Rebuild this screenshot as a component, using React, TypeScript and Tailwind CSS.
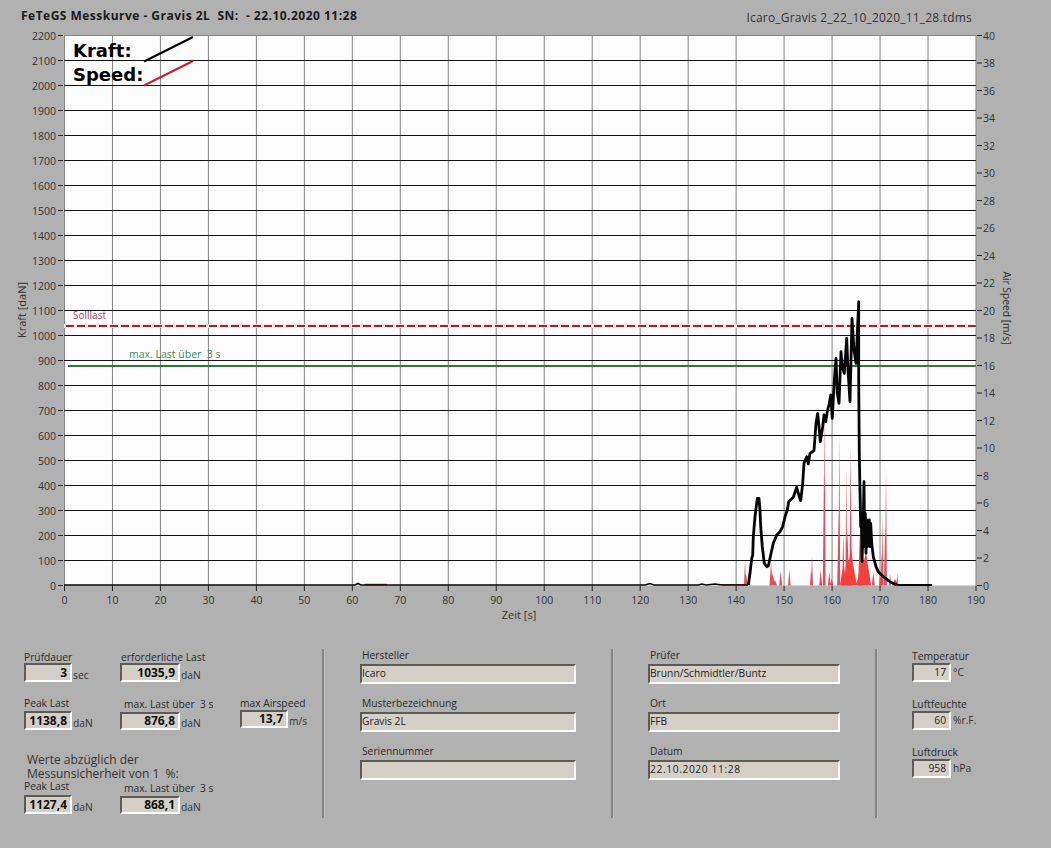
import React from "react";

const X0 = 64.5;
const XS = 911.5 / 190;
const Y0 = 585.5;
const hLines = Array.from({ length: 23 }, (_, i) => i);
const vLines = Array.from({ length: 20 }, (_, i) => i);
const rLabels = Array.from({ length: 21 }, (_, i) => i);

const z: [number, number][] = [
  [55,915],[60,880],[65,835],[68,825],[70,770],[75,710],[82,655],[87,655],[90,690],[92,740],[97,800],[103,850],[110,860],[115,858],[122,825],[130,790],[140,765],[150,755],[158,740],[165,710],[172,690],[176,665],[190,652],[200,622],[205,640],[212,662],[218,610],[222,550],[230,530],[235,552],[240,520],[252,512],[258,430],[263,400],[267,440],[271,485],[278,440],[282,405],[287,425],[292,395],[298,370],[302,345],[307,415],[313,300],[318,235],[322,340],[327,370],[333,215],[337,260],[343,280],[350,175],[354,270],[360,365],[366,115],[372,210],[378,250],[386,65],[386,300],[388,520],[390,640],[392,740],[394,700],[396,845],[399,760],[402,605],[404,800],[406,700],[408,820],[410,720],[412,800],[414,730],[416,790],[418,720],[420,800],[422,730],[425,790],[430,830],[438,860],[445,875],[460,890],[480,905],[500,915],
];
const toPage = ([a, b]: [number, number]) => `${(730 + a / 3).toFixed(1)},${(280 + b / 3).toFixed(1)}`;
const flatPts = "64,585 355,585 358,583.5 361,585 645,585 650,583.5 654,585 698,585 702,584 706,585 715,584 722,585 748,585";
const curvePts = z.map(toPage).join(" ");
const tailPts = "896.7,585 932,585";

const spikes: [number, number, number][] = [
  [45,840,2],[48,880,3],[123,845,3],[128,880,5],[135,900,4],[152,872,3],[178,868,2.5],[246,825,2],[243,870,2],[272,870,3],
  [282,570,2.5],[284,370,1.8],[298,875,3],[305,895,3],[326,690,3],[328,455,1.8],[340,760,2.5],[349,565,1.8],[352,750,4],[362,500,2.5],
  [395,595,2.5],[390,750,4],[430,875,3],[455,810,2],[458,705,1.8],[468,560,1.8],[466,740,3],[480,880,2],[502,880,2],
];
const spikePath = spikes
  .map(([a, b, w]) => {
    const x = 730 + a / 3;
    const y = 280 + b / 3;
    return `M${(x - w / 2).toFixed(1)} 585.5L${x.toFixed(1)} ${y.toFixed(1)}L${(x + w / 2).toFixed(1)} 585.5Z`;
  })
  .join("");
const areaPath =
  "M840 585.5L842 572L844 566L845 574L847 556L849 562L851 548L853 564L855 575L857 585.5Z" +
  "M856 585.5L858 578L860 570L862 556L864 561L866 552L868 566L870 578L871 585.5Z" +
  "M879 585.5L880 574L882 585.5Z M892 585.5L895 579L899 585.5Z";

function Well({ w, h, bold, left, mono, children }: { w: string; h: string; bold?: boolean; left?: boolean; mono?: boolean; children?: React.ReactNode }) {
  return (
    <div
      className={`${w} ${h} box-border flex items-center border-2 border-t-[#5c5c56] border-l-[#5c5c56] border-r-white border-b-white bg-[#d4d0c8] ${left ? "justify-start" : "justify-end pr-[3px]"} ${bold ? "font-bold text-[12px] text-[#111]" : "text-[10.25px] text-[#222]"} ${mono ? "tracking-[0.6px]" : ""}`}
    >
      {children}
    </div>
  );
}

function Metric({ label, value, unit, w, h = "h-[19px]", labelClass = "", className = "" }: { label: string; value: string; unit: string; w: string; h?: string; labelClass?: string; className?: string }) {
  return (
    <div className={`flex flex-col ${className}`}>
      <div className={`h-[12px] leading-[12px] text-[10.25px] text-[#2a2a2a] whitespace-pre ${labelClass}`}>{label}</div>
      <div className="flex items-end">
        <Well w={w} h={h} bold>{value}</Well>
        <span className="ml-[1px] text-[10.25px] leading-[14px] text-[#333]">{unit}</span>
      </div>
    </div>
  );
}

function TextField({ label, value, mono }: { label: string; value?: string; mono?: boolean }) {
  return (
    <div className="flex flex-col">
      <div className="h-[15px] pl-[2px] leading-[12px] text-[10.25px] text-[#2a2a2a]">{label}</div>
      <Well w="w-full" h="h-[20px]" left mono={mono}>{value}</Well>
    </div>
  );
}

function Env({ label, value, unit }: { label: string; value: string; unit: string }) {
  return (
    <div className="flex flex-col">
      <div className="h-[14px] leading-[14px] text-[10.25px] text-[#2a2a2a]">{label}</div>
      <div className="flex items-center">
        <Well w="w-[39px]" h="h-[19px]">{value}</Well>
        <span className="ml-[2px] text-[10.25px] text-[#333]">{unit}</span>
      </div>
    </div>
  );
}

function Sep({ className }: { className: string }) {
  return <div className={`w-[2px] h-[169px] bg-[#858585] border-r border-r-[#bdbdbd] box-content flex-none ${className}`} />;
}

export default function App() {
  return (
    <div className="w-[1051px] h-[848px] overflow-hidden bg-[#b1b1b1] font-['Open_Sans',sans-serif] text-[#222]">
      <header className="h-[28px] flex justify-between items-start pl-[21px] pr-[79px] pt-[7px]">
        <div className="font-bold text-[12px] leading-[17px] tracking-[0.48px] text-[#1a1a1a] whitespace-pre">FeTeGS Messkurve - Gravis 2L  SN:  - 22.10.2020 11:28</div>
        <div className="text-[12px] leading-[17px] pt-[2px] tracking-[0.2px] text-[#333]">Icaro_Gravis 2_22_10_2020_11_28.tdms</div>
      </header>

      <svg viewBox="0 28 1051 597" className="block w-[1051px] h-[597px]">
        <rect x="64.5" y="35.5" width="911.5" height="550" fill="#fcfcfc" />
        {vLines.map((i) => (
          <line key={i} x1={X0 + i * 10 * XS} x2={X0 + i * 10 * XS} y1="35" y2="586" stroke="#858585" strokeWidth="1" />
        ))}
        <line x1="64" x2="976" y1="35.5" y2="35.5" stroke="#858585" />
        {hLines.map((i) => (
          <g key={i}>
            {i > 0 && i < 22 && <line x1="64" x2="976" y1={Y0 - i * 25} y2={Y0 - i * 25} stroke="#111" strokeWidth="1" />}
            <line x1="58" x2="63" y1={Y0 - i * 25} y2={Y0 - i * 25} stroke="#222" />
            <text x="56" y={Y0 - i * 25 + 4} textAnchor="end" fontSize="10.5" fill="#333">{i * 100}</text>
          </g>
        ))}
        {vLines.map((i) => (
          <g key={i}>
            <line x1={X0 + i * 10 * XS} x2={X0 + i * 10 * XS} y1="586" y2="591" stroke="#222" />
            <text x={X0 + i * 10 * XS} y="604" textAnchor="middle" fontSize="10.5" fill="#333">{i * 10}</text>
          </g>
        ))}
        {rLabels.map((i) => (
          <g key={i}>
            <line x1="977" x2="982" y1={Y0 - i * 27.5} y2={Y0 - i * 27.5} stroke="#222" />
            <text x="983" y={Y0 - i * 27.5 + 4} fontSize="10.5" fill="#333">{i * 2}</text>
          </g>
        ))}

        <rect x="64" y="324" width="912" height="4" fill="#fae6e6" />
        <line x1="66" x2="976" y1="326" y2="326" stroke="#a4222e" strokeWidth="2" strokeDasharray="8 3" />
        <line x1="68" x2="976" y1="366" y2="366" stroke="#2c7a32" strokeWidth="2" />
        <text x="73" y="319" fontSize="10" fill="#b23a58">Solllast</text>
        <text x="129" y="358" fontSize="10.5" fill="#3d8a52" xmlSpace="preserve">max. Last über  3 s</text>

        <line x1="365" x2="387" y1="584.5" y2="584.5" stroke="#b03030" strokeWidth="1.5" />
        <line x1="717" x2="747" y1="584.5" y2="584.5" stroke="#b03030" strokeWidth="1" />
        <path d={spikePath} fill="#dc5060" />
        <path d={areaPath} fill="#f5403f" />
        <polyline points={flatPts} fill="none" stroke="#050505" strokeWidth="1.6" />
        <polyline points={tailPts} fill="none" stroke="#050505" strokeWidth="2" />
        <polyline points={curvePts} fill="none" stroke="#050505" strokeWidth="2.8" strokeLinejoin="round" />

        <text x="73" y="57" fontSize="18" fontWeight="700" fill="#000" fontFamily="'DejaVu Sans',sans-serif">Kraft:</text>
        <text x="73" y="81" fontSize="18" fontWeight="700" fill="#000" fontFamily="'DejaVu Sans',sans-serif">Speed:</text>
        <line x1="144" y1="61.5" x2="193" y2="37" stroke="#000" strokeWidth="2" />
        <line x1="144" y1="85.5" x2="193" y2="61" stroke="#c8202c" strokeWidth="2" />

        <text transform="translate(26 310) rotate(-90)" textAnchor="middle" fontSize="11" fill="#333">Kraft [daN]</text>
        <text x="519" y="619" textAnchor="middle" fontSize="11" fill="#333">Zeit [s]</text>
        <text transform="translate(1003 308) rotate(90)" textAnchor="middle" fontSize="10.25" fill="#333">Air Speed [m/s]</text>
      </svg>

      <section className="flex pt-[24px] h-[223px]">
        <div className="w-[322px] flex-none pl-[24px] flex flex-col">
          <div className="grid grid-cols-[96px_120px_auto] items-start pt-[2px]">
            <Metric label="Prüfdauer" value="3" unit="sec" w="w-[48px]" />
            <Metric label="erforderliche Last" value="1035,9" unit="daN" w="w-[60px]" labelClass="pl-[1px]" />
            <div />
          </div>
          <div className="grid grid-cols-[96px_120px_auto] items-start pt-[15px]">
            <Metric label="Peak Last" value="1138,8" unit="daN" w="w-[48px]" labelClass="mb-[2px]" />
            <Metric label="max. Last über  3 s" value="876,8" unit="daN" w="w-[60px]" h="h-[18px]" labelClass="pl-[4px] mb-[2px]" className="mt-[1px]" />
            <Metric label="max Airspeed" value="13,7" unit="m/s" w="w-[48px]" h="h-[18px]" labelClass="mb-[1px]" />
          </div>
          <div className="pl-[3px] pt-[23px] text-[12px] leading-[14px] text-[#333]">
            <div>Werte abzüglich der</div>
            <div className="whitespace-pre">Messunsicherheit von 1  %:</div>
          </div>
          <div className="grid grid-cols-[96px_120px_auto] items-start -mt-[1px]">
            <Metric label="Peak Last" value="1127,4" unit="daN" w="w-[48px]" labelClass="mb-[3px]" />
            <Metric label="max. Last über  3 s" value="868,1" unit="daN" w="w-[60px]" h="h-[18px]" labelClass="pl-[4px] mb-[2px]" className="mt-[2px]" />
          </div>
        </div>
        <Sep className="" />
        <div className="w-[216px] flex-none ml-[35px] flex flex-col gap-[13px]">
          <TextField label="Hersteller" value="Icaro" />
          <TextField label="Musterbezeichnung" value="Gravis 2L" />
          <TextField label="Seriennummer" />
        </div>
        <Sep className="ml-[35px]" />
        <div className="w-[192px] flex-none ml-[34px] flex flex-col gap-[13px]">
          <TextField label="Prüfer" value="Brunn/Schmidtler/Buntz" />
          <TextField label="Ort" value="FFB" />
          <TextField label="Datum" value="22.10.2020 11:28" mono />
        </div>
        <Sep className="ml-[35px]" />
        <div className="ml-[34px] flex flex-col gap-[15px]">
          <Env label="Temperatur" value="17" unit="°C" />
          <Env label="Luftfeuchte" value="60" unit="%r.F." />
          <Env label="Luftdruck" value="958" unit="hPa" />
        </div>
      </section>
    </div>
  );
}
